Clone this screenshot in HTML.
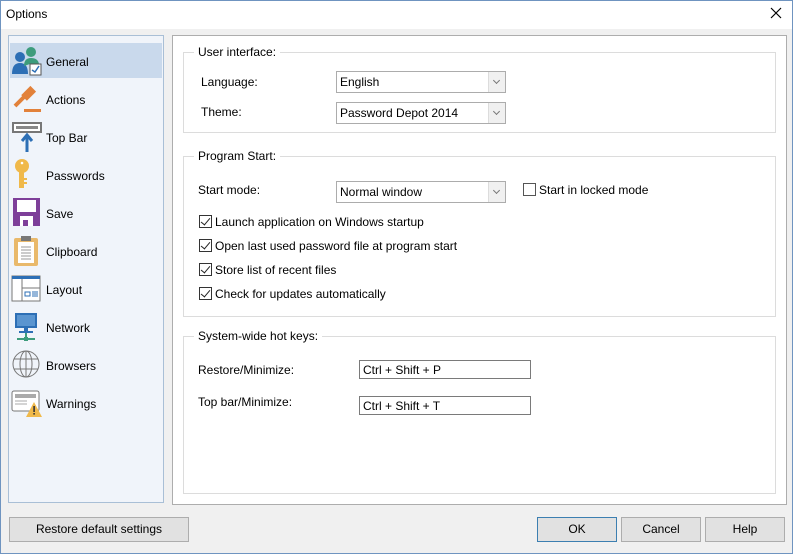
<!DOCTYPE html>
<html><head><style>
*{margin:0;padding:0;box-sizing:border-box}
body{width:793px;height:554px;background:#f0f0f0;font-family:"Liberation Sans",sans-serif;font-size:12px;color:#000;position:relative;overflow:hidden}
.a{position:absolute}
.win{left:0;top:0;width:793px;height:554px;border:1px solid #6f94c0}
.t{white-space:nowrap;line-height:14px}
.grp{border:1px solid #dcdcdc}
.gt{background:#fff;padding:0 4px;white-space:nowrap;line-height:14px}
.cb{background:#fff;border:1px solid #acacac;height:22px}
.cb span{position:absolute;left:3px;top:3px;white-space:nowrap}
.cb i{position:absolute;right:0;top:0;width:17px;height:20px;border-left:1px solid #dcdcdc;background:#f0f0f0}
.cb i:after{content:"";position:absolute;left:5px;top:6px;width:4px;height:4px;border-right:1.3px solid #777;border-bottom:1.3px solid #777;transform:rotate(45deg)}
.ck{width:13px;height:13px;border:1px solid #333;background:#fff}
.ck.on:after{content:"";position:absolute;left:3px;top:0px;width:4px;height:8px;border-right:1.5px solid #222;border-bottom:1.5px solid #222;transform:rotate(40deg)}
.tb{background:#fff;border:1px solid #7a7a7a;height:19px}
.tb span{position:absolute;left:3px;top:2px}
.btn{background:#e1e1e1;border:1px solid #adadad;height:25px;text-align:center;line-height:23px}
.it{left:46px}
</style></head><body>
<div class="a win"></div>
<div class="a" style="left:1px;top:1px;width:791px;height:28px;background:#fff"></div>
<div class="a t" style="left:6px;top:7px">Options</div>
<svg class="a" style="left:770px;top:7px" width="12" height="12"><path d="M1 1L11 11M11 1L1 11" stroke="#000" stroke-width="1.2"/></svg>

<div class="a" style="left:8px;top:35px;width:156px;height:468px;background:#f0f4fa;border:1px solid #a9bfd6"></div>
<div class="a" style="left:10px;top:43px;width:152px;height:35px;background:#c9d9ec"></div>
<!-- icons -->
<svg class="a" style="left:10px;top:44px" width="34" height="34"><circle cx="10" cy="13" r="5" fill="#2d6fb5"/><path d="M2 30Q2 19 10 19Q18 19 18 30Z" fill="#2d6fb5"/><circle cx="21" cy="8" r="5" fill="#3d9c7c"/><path d="M14 22Q14 14 21 14Q28 14 29 20L20 20Z" fill="#3d9c7c"/><rect x="20" y="20" width="11" height="11" fill="#fff" stroke="#555"/><path d="M22 26L25 28L29 22" stroke="#2d6fb5" stroke-width="1.5" fill="none"/></svg>
<svg class="a" style="left:11px;top:84px" width="32" height="30"><path d="M4 22L15 11" stroke="#e2813a" stroke-width="4"/><rect x="14" y="3" width="8" height="13" transform="rotate(45 18 9)" fill="#e2813a"/><rect x="13" y="25" width="17" height="3" fill="#e2813a"/></svg>
<svg class="a" style="left:11px;top:121px" width="32" height="32"><rect x="2" y="2" width="28" height="9" fill="#fff" stroke="#777" stroke-width="2"/><rect x="5" y="5" width="22" height="3" fill="#888"/><path d="M16 31V16M11 20L16 14L21 20" stroke="#2d6fb5" stroke-width="3" fill="none"/></svg>
<svg class="a" style="left:14px;top:158px" width="20" height="34"><circle cx="8" cy="8" r="7" fill="#f0b94a"/><circle cx="8" cy="5" r="1.3" fill="#fff"/><rect x="5" y="12" width="5" height="18" fill="#f0b94a"/><rect x="10" y="20" width="3" height="2" fill="#f0b94a"/><rect x="10" y="24" width="3" height="2" fill="#f0b94a"/></svg>
<svg class="a" style="left:12px;top:197px" width="30" height="32"><rect x="1" y="1" width="27" height="28" fill="#7e3f99"/><rect x="5" y="3" width="19" height="12" fill="#fff"/><rect x="8" y="19" width="13" height="10" fill="#fff"/><rect x="11" y="23" width="5" height="6" fill="#7e3f99"/></svg>
<svg class="a" style="left:13px;top:235px" width="26" height="32"><rect x="1" y="3" width="24" height="28" rx="2" fill="#e9b96b"/><rect x="5" y="7" width="16" height="21" fill="#fff"/><rect x="8" y="1" width="10" height="5" fill="#777"/><path d="M8 12h10M8 15h10M8 18h10M8 21h10M8 24h10" stroke="#999"/></svg>
<svg class="a" style="left:11px;top:275px" width="30" height="28"><rect x="1" y="1" width="28" height="25" fill="#fff" stroke="#777"/><rect x="1" y="1" width="28" height="3" fill="#2d6fb5"/><path d="M11 4V26M11 13H29" stroke="#777"/><rect x="14" y="17" width="5" height="4" fill="none" stroke="#2d6fb5"/><path d="M21 17h6M21 19h6M21 21h6" stroke="#2d6fb5"/></svg>
<svg class="a" style="left:13px;top:311px" width="28" height="32"><rect x="2" y="2" width="22" height="15" fill="#2d6fb5"/><rect x="4" y="4" width="18" height="11" fill="#5a95d0"/><rect x="11" y="17" width="4" height="3" fill="#2d6fb5"/><rect x="6" y="20" width="14" height="2" fill="#2d6fb5"/><path d="M13 22V28M4 28H22" stroke="#3d9c7c" stroke-width="2"/><rect x="11" y="26" width="4" height="4" fill="#3d9c7c"/></svg>
<svg class="a" style="left:11px;top:349px" width="30" height="30"><g fill="none" stroke="#777"><circle cx="15" cy="15" r="13"/><ellipse cx="15" cy="15" rx="6" ry="13"/><path d="M15 2V28M3 10H27M3 20H27"/></g></svg>
<svg class="a" style="left:11px;top:389px" width="32" height="30"><rect x="1" y="2" width="27" height="20" rx="2" fill="#fff" stroke="#777"/><rect x="4" y="5" width="21" height="4" fill="#aaa"/><path d="M4 12h12M4 15h12" stroke="#aaa"/><path d="M23 13L31 28H15Z" fill="#f0b94a"/><rect x="22.3" y="17" width="1.6" height="6" fill="#333"/><rect x="22.3" y="24" width="1.6" height="1.6" fill="#333"/></svg>

<div class="a t it" style="top:55px">General</div>
<div class="a t it" style="top:93px">Actions</div>
<div class="a t it" style="top:131px">Top Bar</div>
<div class="a t it" style="top:169px">Passwords</div>
<div class="a t it" style="top:207px">Save</div>
<div class="a t it" style="top:245px">Clipboard</div>
<div class="a t it" style="top:283px">Layout</div>
<div class="a t it" style="top:321px">Network</div>
<div class="a t it" style="top:359px">Browsers</div>
<div class="a t it" style="top:397px">Warnings</div>

<div class="a" style="left:172px;top:35px;width:615px;height:470px;background:#fff;border:1px solid #adadad"></div>

<div class="a grp" style="left:183px;top:52px;width:593px;height:81px"></div>
<div class="a gt" style="left:194px;top:45px">User interface:</div>
<div class="a t" style="left:201px;top:75px">Language:</div>
<div class="a cb" style="left:336px;top:71px;width:170px"><span>English</span><i></i></div>
<div class="a t" style="left:201px;top:105px">Theme:</div>
<div class="a cb" style="left:336px;top:102px;width:170px"><span>Password Depot 2014</span><i></i></div>

<div class="a grp" style="left:183px;top:156px;width:593px;height:161px"></div>
<div class="a gt" style="left:194px;top:149px">Program Start:</div>
<div class="a t" style="left:198px;top:183px">Start mode:</div>
<div class="a cb" style="left:336px;top:181px;width:170px"><span>Normal window</span><i></i></div>
<div class="a ck" style="left:523px;top:183px;border-color:#555"></div>
<div class="a t" style="left:539px;top:183px">Start in locked mode</div>
<div class="a ck on" style="left:199px;top:215px"></div><div class="a t" style="left:215px;top:215px">Launch application on Windows startup</div>
<div class="a ck on" style="left:199px;top:239px"></div><div class="a t" style="left:215px;top:239px">Open last used password file at program start</div>
<div class="a ck on" style="left:199px;top:263px"></div><div class="a t" style="left:215px;top:263px">Store list of recent files</div>
<div class="a ck on" style="left:199px;top:287px"></div><div class="a t" style="left:215px;top:287px">Check for updates automatically</div>

<div class="a grp" style="left:183px;top:336px;width:593px;height:158px"></div>
<div class="a gt" style="left:194px;top:329px">System-wide hot keys:</div>
<div class="a t" style="left:198px;top:363px">Restore/Minimize:</div>
<div class="a tb" style="left:359px;top:360px;width:172px"><span>Ctrl + Shift + P</span></div>
<div class="a t" style="left:198px;top:395px">Top bar/Minimize:</div>
<div class="a tb" style="left:359px;top:396px;width:172px"><span>Ctrl + Shift + T</span></div>

<div class="a btn" style="left:9px;top:517px;width:180px">Restore default settings</div>
<div class="a btn" style="left:537px;top:517px;width:80px;border-color:#3c7fb1">OK</div>
<div class="a btn" style="left:621px;top:517px;width:80px">Cancel</div>
<div class="a btn" style="left:705px;top:517px;width:80px">Help</div>
</body></html>
